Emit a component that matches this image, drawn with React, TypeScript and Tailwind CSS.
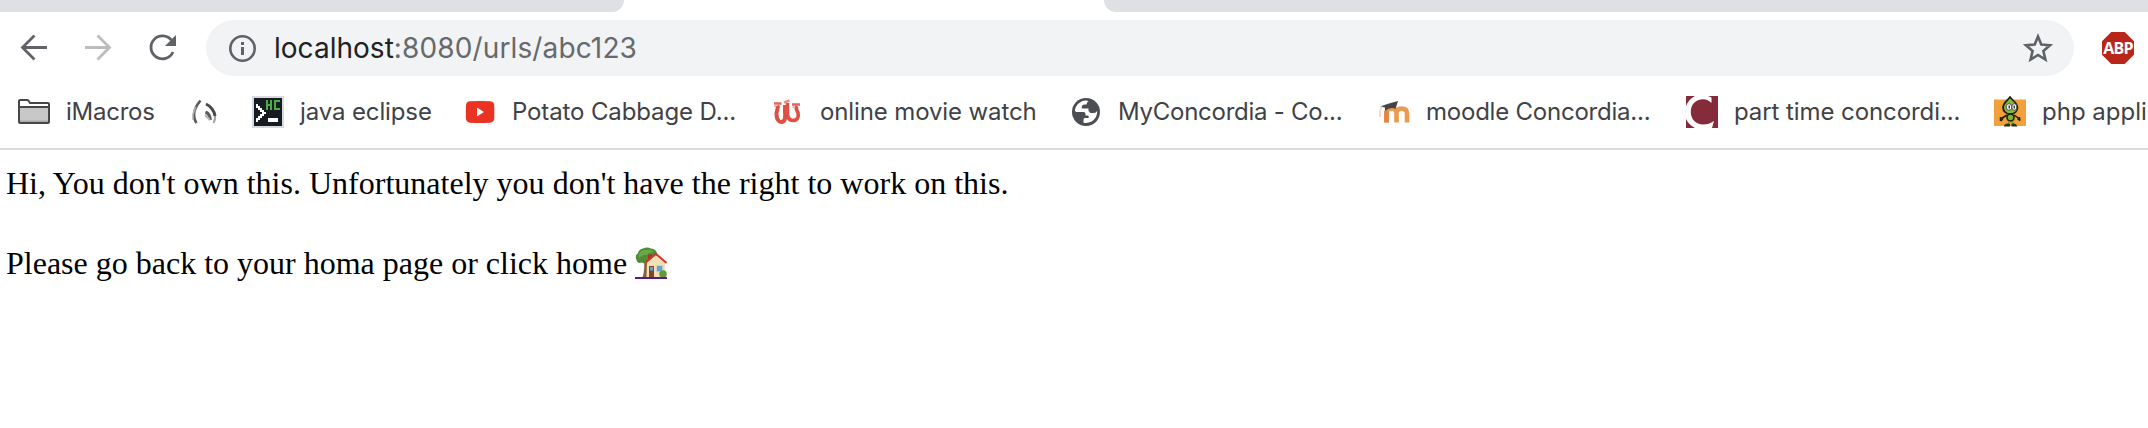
import type { ReactNode } from "react";

const FolderIcon = () => (
  <svg className="size-8" viewBox="0 0 32 32" fill="none">
    <path d="M1 4.5Q1 4 1.5 4H9Q10 4 10.7 5L12 7H30.5Q31 7 31 7.5V11H1Z" fill="#fff" />
    <path d="M1 11H31V27H1Z" fill="#c8c8c8" />
    <path d="M1 24.500H31V27H1Z" fill="#a9a9a9" />
    <path d="M1 5Q1 4 2 4H9Q10 4 10.700 5L12 7H30Q31 7 31 8V26Q31 27 30 27H2Q1 27 1 26ZM1 11H31" stroke="#474747" strokeWidth="2" />
  </svg>
);

const LeafIcon = () => (
  <svg className="size-8" viewBox="0 0 32 32" fill="none">
    <path d="M12.500 4.500C9.500 8 7.500 11 6.500 15C5.500 19 6 23 8.500 27" stroke="#5a5a5a" strokeWidth="2.600" />
    <path d="M8 11C5.500 15 4.300 18 5 24" stroke="#b5b5b5" strokeWidth="1.500" />
    <path d="M18 8C22.500 10 26.500 15 27 20" stroke="#4a4a4a" strokeWidth="3" />
    <path d="M27 20Q27.500 24 25.500 27" stroke="#a0a0a0" strokeWidth="2" />
    <path d="M17.500 16C20 17 22 19 22.500 24" stroke="#5c5c5c" strokeWidth="3" />
    <path d="M17 19L22 24" stroke="#b5b5b5" strokeWidth="2" />
  </svg>
);

const ConsoleIcon = () => (
  <svg className="size-8" viewBox="0 0 32 32" fill="none" shapeRendering="crispEdges">
    <path d="M0 0H32V32H0Z" fill="#d9dadd" />
    <path d="M2 2H30V30H2Z" fill="#171b22" />
    <path d="M15 4V14M19 4V14M15 9H19M28 5H23V13H28" stroke="#4cab43" strokeWidth="2" />
    <path d="M4 8H6V10H8V12H10V14H12V16H14V18H12V20H10V22H8V24H6V26H4V22H6V20H8V18H10V16H8V14H6V12H4Z" fill="#fff" />
    <path d="M16 22H26V26H16Z" fill="#fff" />
  </svg>
);

const VideoIcon = () => (
  <svg className="size-8" viewBox="0 0 32 32">
    <path d="M6 5.300Q16 4.700 26 5.300Q30.200 5.500 30.300 10V22Q30.200 26.300 26 26.700Q16 27.300 6 26.700Q2 26.300 1.900 22V10Q2 5.500 6 5.300Z" fill="#ea3323" />
    <path d="M13 11.500L20 16L13 20.500Z" fill="#fff" />
  </svg>
);

const MovieIcon = () => (
  <svg className="size-8" viewBox="0 0 32 32" fill="none">
    <path d="M5.500 9.500C7 12 4 14.500 4.500 19C4.800 23.500 7 26.500 10 26C14 25 13.500 20 13 15V9" stroke="#de4f44" strokeWidth="4" />
    <path d="M15.500 7V17C15.500 22 17.500 24.500 21 24.500C25.500 24.500 27 21 26 17C25.500 14.500 23 13 25 10" stroke="#de4f44" strokeWidth="3.600" />
    <path d="M2 7.500H9.500M20 8.500H28" stroke="#e2665c" strokeWidth="2.600" />
    <path d="M12 6.500L17.500 4.500" stroke="#ec8d85" strokeWidth="2.400" />
    <path d="M2.500 11L4 9M20.500 10.500L23 12" stroke="#f3a9a2" strokeWidth="1.600" />
  </svg>
);

const GlobeIcon = () => (
  <svg className="size-8" viewBox="0 0 32 32">
    <circle cx="16" cy="16" r="14" fill="#4d4e53" />
    <path d="M18.500 4.900A11.300 11.300 0 0 0 4.800 14.500L6 16H13.500Q15.500 16 15.500 18V19.500H18Q19.500 21 18.500 22H15Q13.500 22 13.500 23.500V26.700A11.300 11.300 0 0 0 27.200 14.800Q26 17.200 23.500 17H20.500L18.500 15V12.500H12.500Q11.500 12.500 11.700 11.200Q12 8.500 14.500 8.500H16.500Q17 5.500 18.500 4.900Z" fill="#fff" />
  </svg>
);

const MoodleIcon = () => (
  <svg className="size-8" viewBox="0 0 32 32" fill="none">
    <path d="M8.500 26.500V17Q8.500 12.500 13.500 12.500Q18.500 12.500 18.500 17.500V26.500M18.500 17.500Q18.500 12.500 23.500 12.500Q29 12.500 29 17.500V26.500" stroke="#eb9a50" strokeWidth="4.600" />
    <path d="M8.500 26.500V15" stroke="#e58440" strokeWidth="4.600" />
    <path d="M2 10.500L11 7.500L20 5L17.500 13Q12.500 10.500 7 15V11.500Z" fill="#454545" />
    <path d="M4 10.500L2 15V21" stroke="#f6d9cb" strokeWidth="1.800" />
  </svg>
);

const ConcordiaIcon = () => (
  <svg className="size-8" viewBox="0 0 32 32">
    <path d="M0 0H32V32H0Z" fill="#852c3a" />
    <path d="M0 10Q3 3 9 0H22L25.500 1.500V7Q22 3.500 17.500 3.300C9 3.300 4.800 9 4.800 16C4.800 23.500 10 28.500 17 28.500Q23 28.500 28 25L26 32H9Q3 29 0 23Z" fill="#fff" />
  </svg>
);

const MascotIcon = () => (
  <svg className="size-8" viewBox="0 0 32 32" fill="none">
    <path d="M0 3.500H32V30H0Z" fill="#f2a03b" />
    <path d="M16 1C18 4 23.500 7 23.500 11.500C23.500 15.500 20.500 18 16.500 18C12 18 9 15.500 9 11.500C9 7 14 4 16 1Z" fill="#83b83c" stroke="#182008" strokeWidth="1.600" />
    <path d="M15 3C8 8 9 15 14 17.500L10 15.500L8.500 11Z" fill="#182008" />
    <ellipse cx="15" cy="11" rx="2.800" ry="3.300" fill="#fff" stroke="#333" strokeWidth=".8" />
    <ellipse cx="20.300" cy="11" rx="2.500" ry="3.300" fill="#fff" stroke="#333" strokeWidth=".8" />
    <path d="M15.200 9.500V12.500M20.200 9.500V12.500" stroke="#222" strokeWidth="1.300" />
    <ellipse cx="16.500" cy="21.500" rx="3.500" ry="3.500" fill="#7eb339" stroke="#182008" strokeWidth="1.600" />
    <path d="M13 19L7.500 22.500M20 19L25 22.500M6.500 21V25M9 22L7 25M25.500 21V25M23.500 23L26.500 24" stroke="#182008" strokeWidth="1.500" />
    <path d="M15 25V28M18.500 25V28" stroke="#6ea32f" strokeWidth="1.800" />
    <path d="M10 29.500Q12 26.500 16 28V30.500H10ZM17.500 28Q22 26.500 23.500 30.500H17.500Z" fill="#21340d" />
  </svg>
);

const HouseGardenIcon = () => (
  <svg className="block size-8" viewBox="0 0 32 32">
    <path d="M9 12Q10 23 7.500 30.500H14V13Z" fill="#87603a" />
    <path d="M1.500 13Q-.5 8.500 3 6Q4 2 8 1.500Q12-.5 16 1.500Q21 2 22 6Q23 9 20 12L14 15.500Q10 17.500 7 15.500Q2.500 17 1.500 13Z" fill="#4f8c36" />
    <path d="M4 7Q7 2 12 3Q16 2 19 5Q14 5 12 8Q8 7 4 11Z" fill="#6aa948" />
    <path d="M12 15L21 8L30 16V30.500H11.500Z" fill="#f2dfb5" />
    <path d="M13 7.500H17V11L13 13Z" fill="#b62e25" />
    <path d="M10.500 15.800L20.800 6.800L31.500 16" fill="none" stroke="#d5342a" strokeWidth="2" />
    <path d="M14 19H19V30H14Z" fill="#854528" />
    <path d="M15 20H18V23.500H15ZM22 19H27.500V24.500H22Z" fill="#5ba5d9" />
    <path d="M21.500 18.500H28V25H21.500Z" fill="none" stroke="#dbd2bd" />
    <circle cx="28" cy="27" r="3.800" fill="#609b38" />
    <path d="M0 30H32V32H0Z" fill="#551a8b" />
  </svg>
);

type Bookmark = { icon: ReactNode; label?: string; cell: string };

const bookmarks: Bookmark[] = [
  { icon: <FolderIcon />, label: "iMacros", cell: "w-[170px] tracking-[-0.26px]" },
  { icon: <LeafIcon />, cell: "w-16" },
  { icon: <ConsoleIcon />, label: "java eclipse", cell: "w-[212px] tracking-[-0.12px]" },
  { icon: <VideoIcon />, label: "Potato Cabbage D...", cell: "w-[308px] tracking-[-0.12px]" },
  { icon: <MovieIcon />, label: "online movie watch", cell: "w-[298px] tracking-[-0.12px]" },
  { icon: <GlobeIcon />, label: "MyConcordia - Co...", cell: "w-[308px] tracking-[-0.26px]" },
  { icon: <MoodleIcon />, label: "moodle Concordia...", cell: "w-[308px] tracking-[-0.22px]" },
  { icon: <ConcordiaIcon />, label: "part time concordi...", cell: "w-[308px] tracking-[-0.08px]" },
  { icon: <MascotIcon />, label: "php appli", cell: "w-[170px]" },
];

const TabStrip = () => (
  <div className="flex h-3 justify-between bg-white">
    <div className="w-[624px] rounded-br-[16px] bg-[#dee0e4]" />
    <div className="w-[1044px] rounded-bl-[16px] bg-[#dee0e4]" />
  </div>
);

const Toolbar = () => (
  <div className="flex h-[72px] items-center pt-2 pb-2">
    <svg className="ml-[18px] size-8 shrink-0" viewBox="0 0 32 32" fill="none" stroke="#5f6368" strokeWidth="2.800">
      <path d="M29 15.500H4.500M16.500 3.500L4.500 15.500L16.500 27.500" />
    </svg>
    <svg className="ml-8 size-8 shrink-0" viewBox="0 0 32 32" fill="none" stroke="#babcbe" strokeWidth="2.800">
      <path d="M3 15.500H27.500M15.500 3.500L27.500 15.500L15.500 27.500" />
    </svg>
    <svg className="ml-8 size-8 shrink-0" viewBox="0 0 32 32" fill="none">
      <path d="M25.500 8.200A11.500 11.500 0 1 0 27 20" stroke="#5f6368" strokeWidth="2.800" />
      <path d="M30 3V14H19Z" fill="#5f6368" />
    </svg>
    <div className="ml-7 flex h-14 w-[1868px] shrink-0 items-center rounded-full bg-[#f1f3f4] pr-5 pl-5">
      <svg className="size-8 shrink-0" viewBox="0 0 32 32" fill="none">
        <circle cx="16.500" cy="16.500" r="12.200" stroke="#5f6368" strokeWidth="2.600" />
        <path d="M16.500 15V23M16.500 10V13" stroke="#5f6368" strokeWidth="3" />
      </svg>
      <div className="ml-4 grow text-[28px] leading-8 tracking-[0.13px] whitespace-nowrap text-[#66696d]">
        <span className="tracking-[0.02px] text-[#202124]">localhost</span>:8080/urls/abc123
      </div>
      <svg className="size-8 shrink-0" viewBox="0 0 32 32" fill="none">
        <path d="M16 4.500L19.300 12.600L28 13.300L21.400 19L23.400 27.500L16 23L8.600 27.500L10.600 19L4 13.300L12.700 12.600Z" stroke="#5f6368" strokeWidth="2.600" />
      </svg>
    </div>
    <div className="ml-7 flex size-8 shrink-0 items-center justify-center bg-[#b82619] [clip-path:polygon(29%_0,71%_0,100%_29%,100%_71%,71%_100%,29%_100%,0_71%,0_29%)]">
      <span className="font-['Open_Sans',sans-serif] text-base leading-8 font-bold tracking-[-0.7px] text-white">ABP</span>
    </div>
  </div>
);

const BookmarkBar = () => (
  <div className="flex h-[66px] overflow-hidden border-b-2 border-[#dadce0] pt-3 pl-[18px]">
    {bookmarks.map((b, i) => (
      <div key={i} className={`flex h-8 shrink-0 items-center gap-4 ${b.cell}`}>
        <span className="shrink-0">{b.icon}</span>
        {b.label && <span className="text-2xl leading-8 whitespace-nowrap text-[#3f4246]">{b.label}</span>}
      </div>
    ))}
  </div>
);

export default function App() {
  return (
    <div className="h-[428px] w-[2148px] overflow-hidden bg-white font-['Inter',sans-serif]">
      <TabStrip />
      <Toolbar />
      <BookmarkBar />
      <main className="pt-[15px] pl-1.5 font-['Liberation_Serif',serif] text-[32px] leading-[36px] text-black">
        <p className="tracking-[0.01px]">Hi, You don't own this. Unfortunately you don't have the right to work on this.</p>
        <p className="mt-11 flex items-center">
          <span>Please go back to your homa page or click home</span>
          <a href="#" className="ml-2 flex">
            <HouseGardenIcon />
          </a>
        </p>
      </main>
    </div>
  );
}
